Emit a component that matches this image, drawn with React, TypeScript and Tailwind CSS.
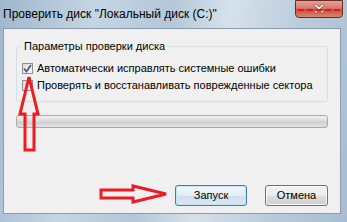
import React from "react"

function CloseButton() {
  return (
    <div className="relative w-[48px] h-[18px] rounded-b-[4px] border border-[#6e2a22] bg-[linear-gradient(180deg,#e8a093_0%,#d47b6c_45%,#c4503f_55%,#d88878_100%)] flex items-center justify-center">
      <span className="text-white font-bold text-[15px] leading-none [text-shadow:0_0_1px_#3b1a16,0_0_1px_#3b1a16] font-['DejaVu_Sans',sans-serif]">
        ✕
      </span>
      <div className="absolute left-[2px] right-[2px] top-[8px] border-t-2 border-dashed border-[#e8161c]" />
    </div>
  )
}

function Checkbox({ checked }: { checked?: boolean }) {
  return (
    <div className="w-[11px] h-[11px] border border-[#8f8f8f] bg-[linear-gradient(135deg,#dcdcdc,#fafafa)] flex items-center justify-center shrink-0">
      {checked && (
        <svg width="9" height="9" viewBox="0 0 9 9">
          <path d="M1 4.5 L3.5 7.5 L8 1" stroke="#4a5f82" strokeWidth="1.8" fill="none" />
        </svg>
      )}
    </div>
  )
}

export default function App() {
  return (
    <div className="relative w-[347px] h-[222px] overflow-hidden whitespace-nowrap bg-[linear-gradient(100deg,#9fb7cc_0%,#c5d5e3_25%,#b4c7d8_45%,#d6e1ea_60%,#b9cbdb_80%,#a8bdd2_100%)] font-['Liberation_Sans',Arial,sans-serif]">
      <div className="h-[28px] flex items-start justify-between pl-[3px] pr-[4px]">
        <span className="mt-[6px] text-[12px] leading-[16px] text-black">
          Проверить диск "Локальный диск (C:)"
        </span>
        <CloseButton />
      </div>

      <div className="ml-[3px] mr-[6px] h-[186px] bg-[#f0f0f0] border border-[#8a9bad] flex flex-col px-[12px]">
        <fieldset className="mt-[10px] h-[63px] border border-[#d5dfe5] rounded-[3px] px-[5px] pb-[4px]">
          <legend className="px-[2px] text-[11px] leading-[14px] text-black">
            Параметры проверки диска
          </legend>
          <div className="flex flex-col gap-[3px] mt-[8px]">
            <label className="flex items-center gap-[4px] text-[11px] leading-[14px] text-black">
              <Checkbox checked />
              Автоматически исправлять системные ошибки
            </label>
            <label className="flex items-center gap-[4px] text-[11px] leading-[14px] text-black">
              <Checkbox />
              Проверять и восстанавливать поврежденные сектора
            </label>
          </div>
        </fieldset>

        <div className="mt-[13px] h-[13px] rounded-[3px] border border-[#aaaaaa] bg-[linear-gradient(180deg,#f2f2f2_0%,#dcdcdc_45%,#cfcfcf_55%,#e2e2e2_100%)]" />

        <div className="mt-auto mb-[7px] flex justify-end gap-[18px]">
          <button className="w-[72px] h-[21px] rounded-[3px] border border-[#3c7fb1] bg-[linear-gradient(180deg,#f4f8fb_0%,#e3edf5_50%,#cfdeeb_51%,#dce8f2_100%)] shadow-[inset_0_0_0_1px_#c4e5f6] text-[11px] text-black">
            Запуск
          </button>
          <button className="w-[63px] h-[21px] rounded-[3px] border border-[#707070] bg-[linear-gradient(180deg,#f2f2f2_0%,#ebebeb_50%,#dddddd_51%,#cfcfcf_100%)] shadow-[inset_0_0_0_1px_#fbfbfb] text-[11px] text-black">
            Отмена
          </button>
        </div>
      </div>

      <svg className="absolute left-0 top-0 pointer-events-none" width="347" height="222">
        <path
          d="M29 77 L38 114 L34 114 L34 150 L25 150 L25 114 L20 114 Z"
          fill="none"
          stroke="#ec1c24"
          strokeWidth="3"
        />
        <path
          d="M101 190 L133 190 L133 186 L166 194 L133 202 L133 198 L101 198 Z"
          fill="none"
          stroke="#ec1c24"
          strokeWidth="3"
        />
      </svg>
    </div>
  )
}
